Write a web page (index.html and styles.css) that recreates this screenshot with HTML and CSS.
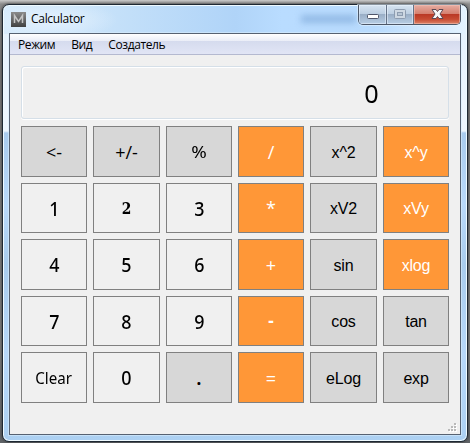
FILE: index.html
```html
<!DOCTYPE html>
<html lang="ru">
<head>
<meta charset="utf-8">
<title>Calculator</title>
<link rel="stylesheet" href="styles.css">
</head>
<body>
<main class="window">
  <header class="titlebar">
    <svg class="app-icon" width="15" height="15" viewBox="0 0 15 15">
      <defs><linearGradient id="g" x1="0" y1="0" x2="0" y2="1"><stop offset="0" stop-color="#8b8b8b"/><stop offset="1" stop-color="#414141"/></linearGradient></defs>
      <rect width="15" height="15" fill="url(#g)"/>
      <path d="M3.500 11V3.500L7.500 9.500L11.500 3.500V11" fill="none" stroke="#c4c4c4" stroke-width="1.500"/>
    </svg>
    <h1 class="title">Calculator</h1>
    <span class="backdrop-text" aria-hidden="true"></span>
    <div class="controls">
      <span class="control"><svg width="27" height="19" viewBox="0 0 27 19"><rect x="8.500" y="9.500" width="11" height="4" rx="1" fill="#fff" stroke="#50566b"/></svg></span>
      <span class="control"><svg width="26" height="19" viewBox="0 0 26 19"><rect x="7.500" y="4.500" width="11" height="9" rx="1" fill="#ced8e3" stroke="#8d9cb0"/><rect x="10.500" y="7.500" width="5" height="3" fill="#b8c6d5" stroke="#8d9cb0"/></svg></span>
      <span class="control close"><svg width="46" height="19" viewBox="0 0 46 19"><path d="M18 4.500H22L23.500 6.500L25 4.500H29L26 9L29 13.500H25L23.500 11.500L22 13.500H18L21 9Z" fill="#f7f7f7" stroke="#5b4854"/></svg></span>
    </div>
  </header>
  <section class="client">
    <nav class="menu"><span>Режим</span><span>Вид</span><span>Создатель</span></nav>
    <output class="display"><span>0</span></output>
    <div class="keys">
      <button class="gray op"><span>&lt;-</span></button><button class="gray op"><span>+/-</span></button><button class="gray op percent"><span>%</span></button><button class="orange op"><span>/</span></button><button class="gray fn"><span>x^2</span></button><button class="orange fn"><span>x^y</span></button>
      <button class="digit"><span>1</span></button><button class="digit serif"><span>2</span></button><button class="digit"><span>3</span></button><button class="orange op star"><span>*</span></button><button class="gray fn"><span>xV2</span></button><button class="orange fn"><span>xVy</span></button>
      <button class="digit"><span>4</span></button><button class="digit"><span>5</span></button><button class="digit"><span>6</span></button><button class="orange op"><span>+</span></button><button class="gray fn"><span>sin</span></button><button class="orange fn"><span>xlog</span></button>
      <button class="digit"><span>7</span></button><button class="digit"><span>8</span></button><button class="digit"><span>9</span></button><button class="orange minus"><span>-</span></button><button class="gray fn"><span>cos</span></button><button class="gray fn"><span>tan</span></button>
      <button class="clear"><span>Clear</span></button><button class="digit"><span>0</span></button><button class="gray dot"><span>.</span></button><button class="orange op"><span>=</span></button><button class="gray fn"><span>eLog</span></button><button class="gray fn"><span>exp</span></button>
    </div>
    <svg class="grip" width="9" height="9" viewBox="0 0 9 9"><path d="M7 1h2v2H7zM4 4h2v2H4zM7 4h2v2H7zM1 7h2v2H1zM4 7h2v2H4zM7 7h2v2H7z" fill="#fff"/><path d="M6 0h2v2H6zM3 3h2v2H3zM6 3h2v2H6zM0 6h2v2H0zM3 6h2v2H3zM6 6h2v2H6z" fill="#b9b9b9"/></svg>
  </section>
</main>
</body>
</html>
```
FILE: styles.css
```css
* { box-sizing: border-box; }
body {
  margin: 0;
  width: 470px;
  height: 443px;
  padding: 4px 2px 1px;
  overflow: hidden;
  background: linear-gradient(#c9c9c9, #8d8d8d 4px, #858585 12px, #777 60px, #7c7c7c 350px, #606468);
}
.window {
  width: 466px;
  height: 438px;
  border: 1px solid #1e2833;
  border-radius: 7px;
  padding: 0 6px 6px;
  background:
    radial-gradient(ellipse 60px 18px at 55px 15px, #f1f8ff99, transparent) 0 0 / 100% 29px no-repeat,
    linear-gradient(90deg, #d9ecfc, #c4e0f9 25%, #b0d4f8 50%, #b9dcff 60%, #b9dbfd 80%, #e4f3ff) 0 0 / 100% 29px no-repeat,
    linear-gradient(#e3f1fd 0, #eef6fd 126px, #a9cbed 128px, #b9d9fa 200px, #a9cced 260px, #b7d8fa 350px, #acd0f2);
  box-shadow: inset 0 0 0 1px #effaff, 0 0 3px #333;
}
.titlebar {
  display: flex;
  align-items: flex-start;
  height: 28px;
}
.app-icon { margin: 7px 0 0 2px; }
.title {
  margin: 5px 0 0 5px;
  font: 12px/17px "Open Sans", "Noto Sans", sans-serif;
  color: #000;
  letter-spacing: -.3px;
}
.backdrop-text {
  width: 55px;
  height: 8px;
  margin: 10px 2px 0 auto;
  background: #5b8ac366;
  filter: blur(3px);
}
.controls {
  display: flex;
  height: 20px;
  border: 1px solid #4d5767;
  border-top: 0;
  border-radius: 0 0 5px 5px;
  overflow: hidden;
  box-shadow: 0 0 0 1px #e8f5ff88;
}
.control {
  display: block;
  height: 19px;
  background: linear-gradient(#d7e4f1, #bdcfe2 45%, #99adc5 48%, #b8cee4);
  box-shadow: inset 0 0 0 1px #eef6ff88;
}
.control svg { display: block; }
.control + .control { border-left: 1px solid #647286; }
.close {
  background: linear-gradient(#e6ada2, #d58170 45%, #b93824 48%, #c74b32 75%, #dc8368);
  box-shadow: inset 0 0 0 1px #f4c5b988;
}
.client {
  position: relative;
  width: 452px;
  height: 402px;
  border: 1px solid #566171;
  background: #f0f0f0;
  box-shadow: 0 0 0 1px #d9ecfb99;
}
.menu {
  display: flex;
  gap: 16px;
  height: 21px;
  padding-left: 8px;
  border-bottom: 1px solid #b4b9d0;
  background: linear-gradient(#fff, #eaedf7 7px, #d5dbee 7px, #e1e5f5);
  font: 12px/22px "Open Sans", "Noto Sans", sans-serif;
  letter-spacing: -.4px;
  color: #000;
}
.display {
  display: block;
  width: 428px;
  height: 53px;
  margin: 11px 0 7px 11px;
  padding-right: 69px;
  border: 1px solid #d5dfe8;
  border-radius: 3px;
  box-shadow: inset 1px 1px #fff, 0 1px #fff;
  text-align: right;
  font: 26px/53px "Noto Sans", sans-serif;
  color: #000;
}
.display span {
  display: inline-block;
  transform: scaleX(.97);
}
.keys {
  display: grid;
  grid-template-columns: 66px 67px 66px 66px 67px 66px;
  grid-template-rows: 51px 50px 51px 50px 51px;
  gap: 6px;
  margin-left: 11px;
}
button {
  display: flex;
  align-items: center;
  justify-content: center;
  min-width: 0;
  margin: 0;
  padding: 2px 0 0;
  border: 1px solid #808080;
  border-radius: 0;
  background: #f0f0f0;
  color: #000;
  font: 17px/20px "Noto Sans", sans-serif;
}
button span { display: block; }
.gray { background: #d7d7d7; }
.orange { background: #ff9737; color: #fff; }
.op { padding-top: 1px; font: 400 18px/20px "Open Sans", "Noto Sans", sans-serif; }
.percent { font: 17px/20px "Noto Sans", sans-serif; }
.percent span { transform: scaleX(1.1); }
.star { padding-top: 0; }
.fn { font: 16px/20px "Liberation Sans", sans-serif; letter-spacing: -.2px; }
.digit { padding-top: 1px; font: 500 19px/20px "Noto Sans", sans-serif; }
.digit span { transform: scaleX(.94); }
.serif { padding-top: 2px; font: bold 16px/20px "DejaVu Serif", serif; }
.serif span { transform: scaleX(.86); }
.minus, .dot { font-weight: bold; }
.minus { padding-top: 0; }
.clear { padding-top: 1px; font-size: 17px; }
.clear span { transform: scaleX(.89); }
.grip {
  position: absolute;
  right: 3px;
  bottom: 2px;
}
```
